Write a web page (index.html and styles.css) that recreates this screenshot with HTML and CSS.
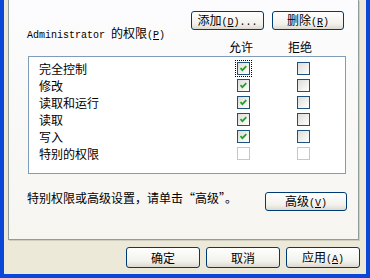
FILE: index.html
```html
<!DOCTYPE html>
<html lang="zh-CN">

<head>
    <meta charset="UTF-8">
    <title>权限</title>
    <link rel="stylesheet" href="styles.css">
</head>

<body>
    <div class="window">
        <div class="panel">
            <div class="top-buttons">
                <button class="btn btn-add">添加<span class="mono">(<u>D</u>)...</span></button>
                <button class="btn btn-remove">删除<span class="mono">(<u>R</u>)</span></button>
            </div>
            <div class="perm-label"><span class="mono">Administrator </span>的权限<span class="mono">(<u>P</u>)</span></div>
            <div class="perm-head"><span class="head-allow">允许</span><span class="head-deny">拒绝</span></div>
            <div class="perm-list">
                <div class="perm-row">
                    <span class="perm-name">完全控制</span>
                    <span class="check checked focus"><svg viewBox="0 0 11 11"><path d="M2.5 5.2 L4.4 7.2 L8.3 3.2" /></svg></span>
                    <span class="check"></span>
                </div>
                <div class="perm-row">
                    <span class="perm-name">修改</span>
                    <span class="check checked"><svg viewBox="0 0 11 11"><path d="M2.5 5.2 L4.4 7.2 L8.3 3.2" /></svg></span>
                    <span class="check"></span>
                </div>
                <div class="perm-row">
                    <span class="perm-name">读取和运行</span>
                    <span class="check checked"><svg viewBox="0 0 11 11"><path d="M2.5 5.2 L4.4 7.2 L8.3 3.2" /></svg></span>
                    <span class="check"></span>
                </div>
                <div class="perm-row">
                    <span class="perm-name">读取</span>
                    <span class="check checked"><svg viewBox="0 0 11 11"><path d="M2.5 5.2 L4.4 7.2 L8.3 3.2" /></svg></span>
                    <span class="check"></span>
                </div>
                <div class="perm-row">
                    <span class="perm-name">写入</span>
                    <span class="check checked"><svg viewBox="0 0 11 11"><path d="M2.5 5.2 L4.4 7.2 L8.3 3.2" /></svg></span>
                    <span class="check"></span>
                </div>
                <div class="perm-row">
                    <span class="perm-name">特别的权限</span>
                    <span class="check disabled"></span>
                    <span class="check disabled"></span>
                </div>
            </div>
            <div class="advanced-row">
                <span class="advanced-text">特别权限或高级设置，请单击“高级”。</span>
                <button class="btn btn-adv">高级<span class="mono">(<u>V</u>)</span></button>
            </div>
        </div>
        <div class="footer">
            <button class="btn btn-foot">确定</button>
            <button class="btn btn-foot">取消</button>
            <button class="btn btn-foot">应用<span class="mono">(<u>A</u>)</span></button>
        </div>
    </div>
</body>

</html>
```

FILE: styles.css
```css
body {
    margin: 0;
    font-family: "Noto Sans CJK SC", sans-serif;
    font-size: 12px;
    color: #000;
    background-color: #ece9d8;
}

.window {
    box-sizing: border-box;
    width: 370px;
    height: 278px;
    border-left: 4px solid #0a46d8;
    border-right: 4px solid #0a46d8;
    border-bottom: 4px solid #0a46d8;
    padding-left: 4px;
    background-color: #ece9d8;
}

.panel {
    box-sizing: border-box;
    width: 351px;
    height: 240px;
    padding-top: 11px;
    border: 1px solid #919b9c;
    border-top: none;
    background: linear-gradient(#fcfcfe, #f6f5f0);
    box-shadow: 1px 1px 0 #d0cebf;
}

.top-buttons {
    display: flex;
    justify-content: flex-end;
    gap: 8px;
    padding-right: 14px;
}

.btn {
    box-sizing: border-box;
    height: 19px;
    padding: 0;
    border: 1px solid #003c74;
    border-radius: 3px;
    background: linear-gradient(#ffffff, #f2f1ec 70%, #dcd9cf);
    font-family: "Noto Sans CJK SC", sans-serif;
    font-size: 12px;
    line-height: 16px;
    color: #000;
}

.btn-add {
    width: 73px;
}

.btn-remove {
    width: 72px;
}

.perm-label {
    margin-top: -3px;
    padding-left: 18px;
    line-height: 12px;
    height: 12px;
}

.mono {
    font-family: "Liberation Mono", monospace;
    font-size: 10px;
    white-space: pre;
}

.perm-head {
    display: flex;
    margin-top: 2px;
    height: 12px;
    line-height: 12px;
    padding-left: 220px;
}

.head-deny {
    margin-left: 35px;
}

.perm-list {
    box-sizing: border-box;
    width: 318px;
    height: 118px;
    margin: 3px 0 0 19px;
    padding: 3px 0 0 10px;
    border: 1px solid #7f9db9;
    background-color: #fff;
}

.perm-row {
    display: grid;
    grid-template-columns: 198px 60px 13px;
    align-items: center;
    height: 17px;
    line-height: 17px;
}

.check {
    box-sizing: border-box;
    display: block;
    width: 13px;
    height: 13px;
    border: 1px solid #1c5180;
    background: linear-gradient(135deg, #dcdcd7, #ffffff);
}

.check svg {
    display: block;
    width: 11px;
    height: 11px;
    fill: none;
    stroke: #21a121;
    stroke-width: 1.7;
}

.check.focus {
    outline: 1px dotted #000;
    outline-offset: 1px;
}

.check.disabled {
    border-color: #cac8bb;
    background: #fff;
}

.advanced-row {
    display: flex;
    justify-content: space-between;
    align-items: flex-start;
    margin-top: 18px;
    padding: 0 11px 0 18px;
}

.advanced-text {
    line-height: 12px;
}

.btn-adv {
    width: 82px;
}

.footer {
    display: flex;
    justify-content: flex-end;
    gap: 6px;
    height: 34px;
    box-sizing: border-box;
    padding: 7px 6px 0 0;
}

.btn-foot {
    width: 74px;
    height: 21px;
    line-height: 18px;
}
```
